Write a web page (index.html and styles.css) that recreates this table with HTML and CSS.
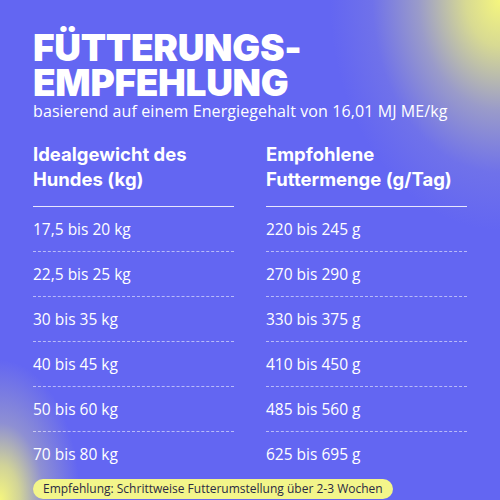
FILE: index.html
```html
<!DOCTYPE html>
<html lang="de">
<head>
<meta charset="utf-8">
<link rel="stylesheet" href="styles.css">
</head>
<body>
<div class="card">
  <h1 class="title">FÜTTERUNGS-<br>EMPFEHLUNG</h1>
  <p class="subtitle">basierend auf einem Energiegehalt von 16,01 MJ ME/kg</p>
  <div class="table">
    <div class="col">
      <div class="head">Idealgewicht des Hundes (kg)</div>
      <div class="cell">17,5 bis 20 kg</div>
      <div class="cell">22,5 bis 25 kg</div>
      <div class="cell">30 bis 35 kg</div>
      <div class="cell">40 bis 45 kg</div>
      <div class="cell">50 bis 60 kg</div>
      <div class="cell last">70 bis 80 kg</div>
    </div>
    <div class="col">
      <div class="head">Empfohlene Futtermenge (g/Tag)</div>
      <div class="cell">220 bis 245 g</div>
      <div class="cell">270 bis 290 g</div>
      <div class="cell">330 bis 375 g</div>
      <div class="cell">410 bis 450 g</div>
      <div class="cell">485 bis 560 g</div>
      <div class="cell last">625 bis 695 g</div>
    </div>
  </div>
  <div class="note">Empfehlung: Schrittweise Futterumstellung über 2-3 Wochen</div>
</div>
</body>
</html>
```
FILE: styles.css
```css
html, body {
  margin: 0;
  padding: 0;
}
.card {
  width: 500px;
  height: 500px;
  box-sizing: border-box;
  padding: 30px 0 0 33px;
  color: #fff;
  font-family: "Open Sans", sans-serif;
  background:
    radial-gradient(ellipse 170px 230px at 100% 0%, #f5f67e 0%, rgba(236,238,130,0.85) 20%, rgba(190,190,175,0.6) 48%, rgba(140,140,215,0.3) 75%, rgba(99,102,241,0) 100%),
    radial-gradient(ellipse 80px 140px at 0% 100%, #f5f67e 0%, rgba(236,238,130,0.8) 25%, rgba(185,185,180,0.5) 55%, rgba(99,102,241,0) 100%),
    #6366f2;
  overflow: hidden;
}
.title {
  margin: 0;
  font-family: "Inter", sans-serif;
  font-weight: 900;
  font-size: 37px;
  line-height: 35px;
  letter-spacing: -0.3px;
}
.subtitle {
  margin: 1px 0 0;
  font-size: 16px;
  line-height: 20px;
  letter-spacing: 0.1px;
}
.table {
  display: grid;
  grid-template-columns: 201px 201px;
  column-gap: 32px;
  margin-top: 17px;
}
.head {
  font-family: "Inter", sans-serif;
  font-weight: 700;
  font-size: 18.5px;
  line-height: 25px;
  padding: 4px 0 14px;
  border-bottom: 1px solid rgba(255,255,255,0.85);
}
.cell {
  height: 44px;
  font-size: 15.5px;
  line-height: 44px;
  border-bottom: 1px dashed rgba(255,255,255,0.55);
}
.cell.last {
  border-bottom: none;
}
.note {
  display: inline-block;
  margin-top: -6px;
  padding: 0 10px;
  height: 20px;
  line-height: 20px;
  border-radius: 10px;
  background: #f3f58a;
  color: #2a2a44;
  font-size: 12px;
}
```
